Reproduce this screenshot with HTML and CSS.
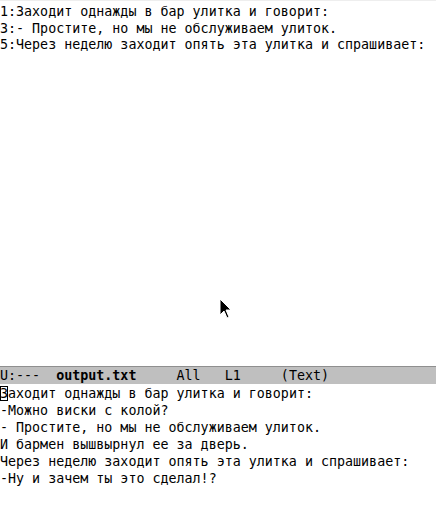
FILE: index.html
```html
<!DOCTYPE html>
<html>
<head>
<meta charset="utf-8">
<link rel="stylesheet" href="styles.css">
</head>
<body>
<div class="frame">
  <div class="window top">
    <div class="line">1:Заходит однажды в бар улитка и говорит:</div>
    <div class="line">3:- Простите, но мы не обслуживаем улиток.</div>
    <div class="line">5:Через неделю заходит опять эта улитка и спрашивает:</div>
  </div>
  <div class="modeline"><span>U:---  </span><b>output.txt</b><span>     All   L1     (Text)</span></div>
  <div class="window bottom">
    <div class="line"><span class="cursor">З</span>аходит однажды в бар улитка и говорит:</div>
    <div class="line">-Можно виски с колой?</div>
    <div class="line">- Простите, но мы не обслуживаем улиток.</div>
    <div class="line">И бармен вышвырнул ее за дверь.</div>
    <div class="line">Через неделю заходит опять эта улитка и спрашивает:</div>
    <div class="line">-Ну и зачем ты это сделал!?</div>
  </div>
  <svg class="pointer" width="14" height="22" viewBox="0 0 14 22">
    <path d="M1 1 L1 17 L5 13 L8 20 L10 19 L7 12 L12 12 Z" fill="#000" stroke="#fff" stroke-width="1"/>
  </svg>
</div>
</body>
</html>
```
FILE: styles.css
```css
html, body {
  margin: 0;
  padding: 0;
  background: #fff;
}
.frame {
  position: relative;
  width: 436px;
  height: 525px;
  overflow: hidden;
  font-family: "DejaVu Sans Mono", monospace;
  font-size: 13.33px;
  color: #000;
  display: flex;
  flex-direction: column;
}
.line {
  height: 16.6px;
  line-height: 16.6px;
  white-space: pre;
}
.window.top {
  height: 364px;
  padding-top: 3px;
  border-top: 1px solid #eeeeee;
  box-sizing: border-box;
  height: 366px;
}
.modeline {
  height: 17px;
  line-height: 17px;
  background: #bfbfbf;
  border-top: 1px solid #8f8f8f;
  white-space: pre;
  color: #000;
}
.modeline b {
  font-weight: bold;
}
.window.bottom {
  padding-top: 1px;
}
.window.bottom .line {
  height: 17px;
  line-height: 17px;
}
.cursor {
  outline: 1px solid #000;
  outline-offset: -1px;
}
.pointer {
  position: absolute;
  left: 219px;
  top: 298px;
}
```
